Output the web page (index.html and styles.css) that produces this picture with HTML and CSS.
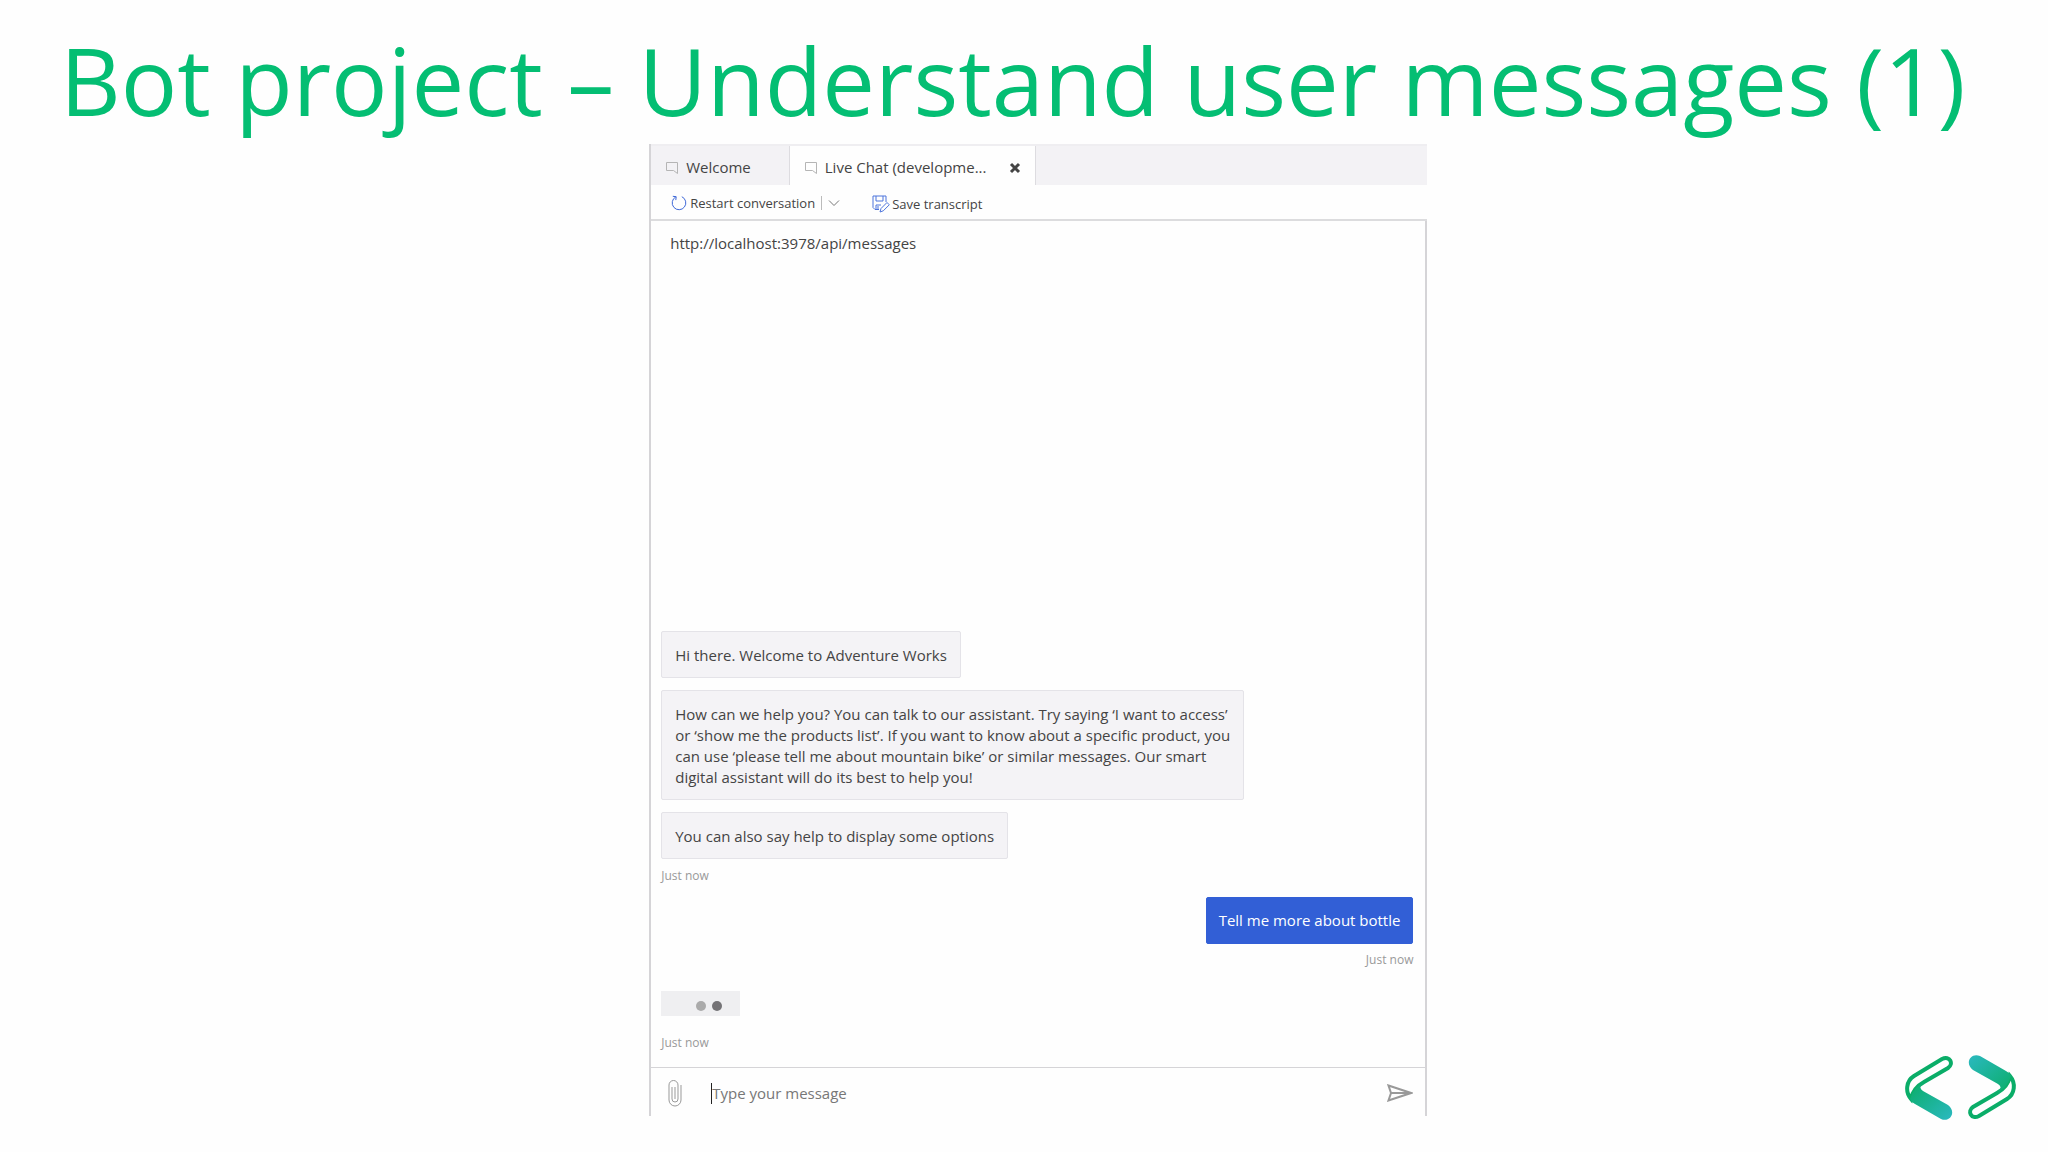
FILE: index.html
```html
<!DOCTYPE html>
<html lang="en">
<head>
    <meta charset="UTF-8" />
    <meta name="viewport" content="width=device-width, initial-scale=1" />
    <title>Bot project</title>
    <link rel="stylesheet" href="styles.css">
</head>
<body>
<h1>Bot project – Understand user messages (1)</h1>

<main class="emulator">
    <nav class="tabs">
        <button class="tab" type="button">
            <svg class="tab-icon" viewBox="0 0 14 14"><path d="M1.500 1.500h11v11l-4-3h-7z" /></svg>
            <span>Welcome</span>
        </button>
        <div class="tab active">
            <button class="tab-name" type="button">
                <svg class="tab-icon" viewBox="0 0 14 14"><path d="M1.500 1.500h11v11l-4-3h-7z" /></svg>
                <span>Live Chat (developme...</span>
            </button>
            <button class="close" type="button" aria-label="Close tab">
                <svg viewBox="0 0 12 12"><path d="M2 2l8 8M10 2l-8 8" /></svg>
            </button>
        </div>
    </nav>

    <div class="toolbar">
        <button type="button">
            <svg class="restart-icon" viewBox="0 0 16 16"><path d="M10.800 1.700A6.800 6.800 0 1 1 4.800 1.900M1.800 1.300l3.400.4-.4 3.400" /></svg>
            Restart conversation
        </button>
        <button class="options" type="button" aria-label="Restart options">
            <svg viewBox="0 0 12 8"><path d="M1 1.500l5 5 5-5" /></svg>
        </button>
        <button class="save" type="button">
            <svg class="save-icon" viewBox="0 0 18 18">
                <path d="M7 14.500H3L1 12.500V1h13v6M4 1v5h7V1M4 14v-4h5M6 11v3" />
                <path d="M8 17l1-3.500 6-6 2.300 2.300-6 6z" />
            </svg>
            Save transcript
        </button>
    </div>

    <section class="chat">
        <p class="url">http://localhost:3978/api/messages</p>
        <div class="messages">
            <p class="bubble">Hi there. Welcome to Adventure Works</p>
            <p class="bubble">How can we help you? You can talk to our assistant. Try saying ‘I want to access’<br>or ‘show me the products list’. If you want to know about a specific product, you<br>can use ‘please tell me about mountain bike’ or similar messages. Our smart<br>digital assistant will do its best to help you!</p>
            <p class="bubble">You can also say help to display some options</p>
            <p class="time">Just now</p>
            <p class="bubble user">Tell me more about bottle</p>
            <p class="time">Just now</p>
            <div class="typing"><span class="dot light"></span><span class="dot"></span></div>
            <p class="time">Just now</p>
        </div>
        <form class="send-box">
            <button type="button" aria-label="Attach file">
                <svg class="clip-icon" viewBox="0 0 14 28"><path d="M10 7v13a3 3 0 0 1-6 0V8M13 6v15a6 6 0 0 1-12 0V6a4.500 4.500 0 0 1 9 0v1M7 8v12" /></svg>
            </button>
            <span class="caret"></span>
            <input type="text" placeholder="Type your message" aria-label="Type your message">
            <button type="submit" aria-label="Send">
                <svg class="send-icon" viewBox="0 0 26 18"><path d="M1.500 1.500L24 9 1.500 16.500 4 9zM4 9h20" /></svg>
            </button>
        </form>
    </section>
</main>

<svg class="logo" viewBox="0 0 112 66" role="img" aria-label="Logo">
    <defs>
        <linearGradient id="fade" x1="0" y1="0" x2="1" y2="1">
            <stop offset="0" stop-color="#0aad68" />
            <stop offset="1" stop-color="#2bb9c0" />
        </linearGradient>
        <g id="bracket">
            <path class="line" d="M6 44C0 37 1 26 9 21L37 4C45 0 49 9 43 13L19 27Q8 33 6 44Z" />
            <path fill="url(#fade)" d="M5 44Q9 31 20 27Q12 32 18 36L43 50C52 57 45 68 36 64L10 49Q6 47 5 44Z" />
        </g>
    </defs>
    <use href="#bracket" />
    <use href="#bracket" transform="rotate(180 55.500 32.500)" />
</svg>
</body>
</html>
```
FILE: styles.css
```css
* {
    box-sizing: border-box;
}

body {
    display: flex;
    flex-direction: column;
    min-height: 100vh;
    margin: 0;
    padding: 14px 0 36px;
    background: #fefefe;
    color: #444;
    font-family: "Open Sans", "Noto Sans", sans-serif;
    font-size: 15px;
    line-height: 21px;
}

h1 {
    margin: 0;
    padding: 2px 0 0 60px;
    color: #04be73;
    font-size: 94px;
    font-weight: 400;
    line-height: 128px;
    white-space: nowrap;
}

p {
    margin: 0;
}

button {
    display: flex;
    align-items: center;
    padding: 0;
    border: 0;
    background: none;
    color: inherit;
    font: inherit;
    cursor: pointer;
}

svg {
    flex: none;
    fill: none;
    stroke: currentColor;
}

.emulator {
    display: flex;
    flex: 1;
    flex-direction: column;
    width: 38%;
    margin-left: 31.7%;
    border-left: 2px solid #d5d4d7;
}

.tabs {
    display: flex;
    height: 41px;
    border-top: 2px solid #efeef1;
    background: #f3f2f5;
}

.tab {
    display: flex;
    align-items: center;
    padding: 4px 38px 0 14px;
    border-right: 1px solid #dddce0;
    white-space: nowrap;
}

.tab.active {
    padding-right: 14px;
    background: #fefefe;
}

.tab-icon {
    width: 14px;
    height: 14px;
    margin-right: 7px;
    color: #b5b5b5;
}

.close {
    margin-left: 22px;
    color: #444;
}

.close svg {
    width: 12px;
    height: 12px;
    stroke-width: 3;
}

.toolbar {
    display: flex;
    align-items: center;
    height: 36px;
    padding: 2px 20px 0;
    border-bottom: 2px solid #dcdcde;
    font-size: 13px;
}

.restart-icon {
    width: 16px;
    height: 16px;
    margin-right: 3px;
    color: #3e68d8;
}

.options {
    height: 14px;
    margin-left: 6px;
    padding-left: 6px;
    border-left: 1px solid #bbb;
    color: #777;
}

.options svg {
    width: 12px;
    height: 8px;
}

.save {
    margin-left: 32px;
    padding-top: 2px;
}

.save-icon {
    width: 18px;
    height: 18px;
    margin-right: 2px;
    color: #4d74dc;
}

.chat {
    display: flex;
    flex: 1;
    flex-direction: column;
    border-right: 2px solid #d5d4d7;
}

.url {
    padding: 12px 19px;
}

.messages {
    display: flex;
    flex: 1;
    flex-direction: column;
    align-items: flex-start;
    justify-content: flex-end;
    padding: 0 12px 14px 10px;
}

.bubble {
    margin-bottom: 12px;
    padding: 13px 13px 11px;
    border: 1px solid #e4e3e8;
    border-radius: 2px;
    background: #f4f3f6;
}

.bubble.user {
    align-self: flex-end;
    margin: 11px 0 5px;
    padding: 12px;
    border-color: #325fd6;
    background: #325fd6;
    color: #fff;
}

.time {
    color: #999;
    font-size: 12px;
}

.bubble + .time {
    margin-top: -6px;
}

.bubble.user + .time {
    align-self: flex-end;
    margin-top: 0;
}

.typing {
    display: flex;
    gap: 6px;
    align-items: center;
    justify-content: flex-end;
    width: 79px;
    height: 25px;
    margin: 21px 0 16px;
    padding-top: 4px;
    padding-right: 18px;
    background: #efeff1;
}

.dot {
    width: 10px;
    height: 10px;
    border-radius: 50%;
    background: #747376;
}

.dot.light {
    background: #aaa;
}

.send-box {
    display: flex;
    align-items: center;
    height: 49px;
    padding: 2px 12px 0 17px;
    border-top: 1px solid #d5d4d7;
    color: #999;
}

.clip-icon {
    width: 14px;
    height: 28px;
}

.caret {
    width: 1px;
    height: 21px;
    margin-left: 29px;
    background: #222;
}

.send-box input {
    flex: 1;
    padding: 0;
    border: 0;
    outline: 0;
    background: none;
    color: #444;
    font: inherit;
}

.send-box input::placeholder {
    color: #777;
    opacity: 1;
}

.send-icon {
    width: 26px;
    height: 18px;
    stroke-width: 2;
}

.logo {
    position: absolute;
    right: 31px;
    bottom: 31px;
    width: 112px;
    height: 66px;
    stroke: none;
}

.logo .line {
    stroke: #0aad68;
    stroke-width: 4;
}
```
